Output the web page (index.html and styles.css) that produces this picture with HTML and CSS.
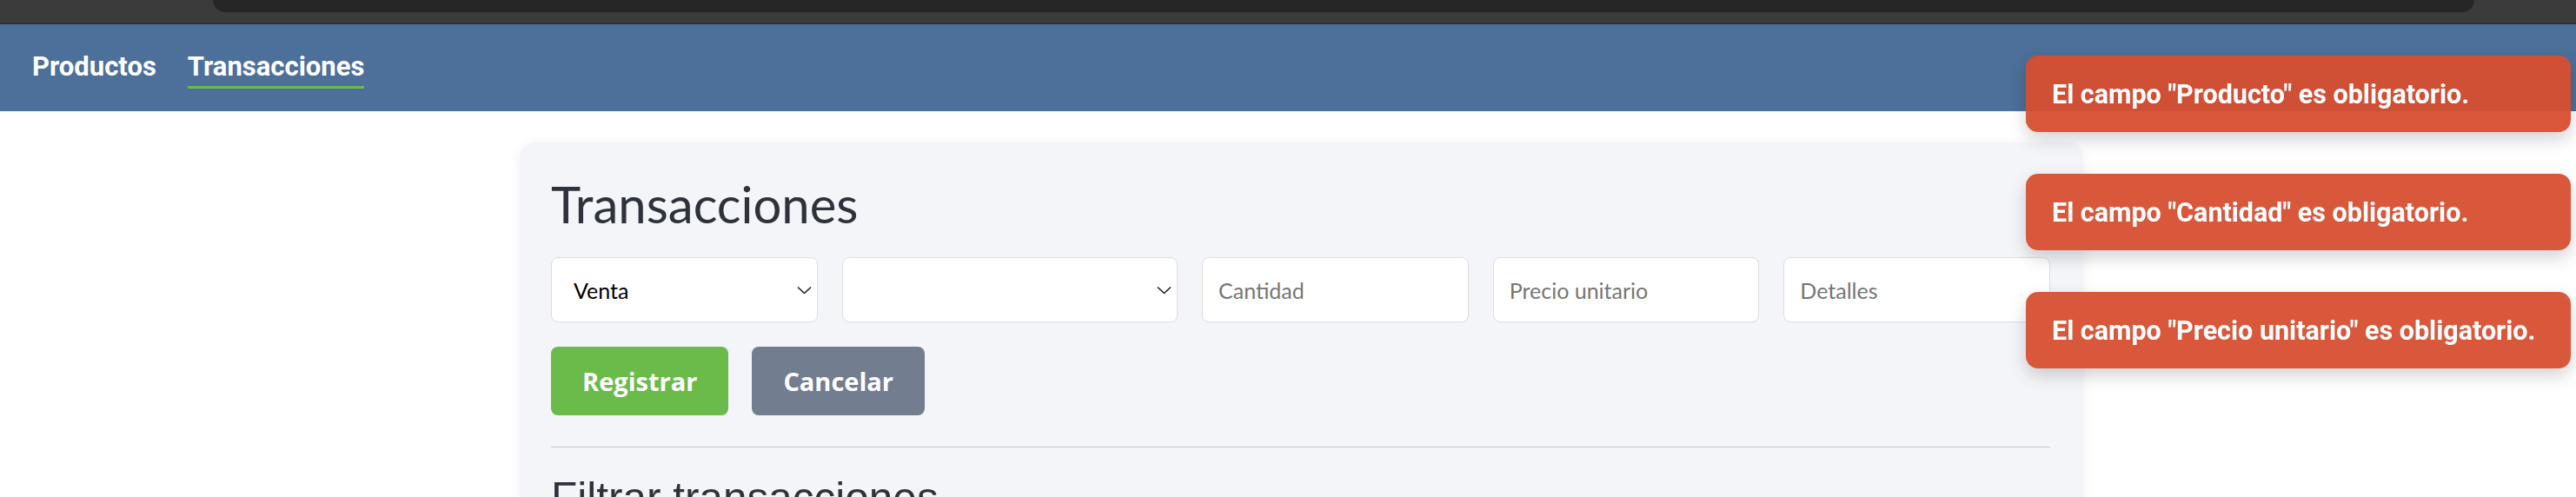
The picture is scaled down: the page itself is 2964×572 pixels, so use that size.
FILE: index.html
```html
<!DOCTYPE html>
<html lang="es">
<head>
<meta charset="utf-8">
<title>Transacciones</title>
<link rel="stylesheet" href="styles.css">
</head>
<body>
  <div class="chrome">
    <div class="urlbar"></div>
  </div>
  <nav class="nav">
    <a href="#" class="nav-link">Productos</a>
    <a href="#" class="nav-link active">Transacciones</a>
  </nav>

  <main class="main">
    <section class="card">
      <h1 class="title">Transacciones</h1>
      <form class="tx-form">
        <div class="form-row">
          <div class="select-wrap">
            <select class="field">
              <option>Venta</option>
              <option>Compra</option>
            </select>
            <svg class="chevron" width="17" height="9" viewBox="0 0 17 9"><path d="M1 1 L8.5 8 L16 1" fill="none" stroke="#1e1e1e" stroke-width="1.6"/></svg>
          </div>
          <div class="select-wrap">
            <select class="field">
              <option></option>
            </select>
            <svg class="chevron" width="17" height="9" viewBox="0 0 17 9"><path d="M1 1 L8.5 8 L16 1" fill="none" stroke="#1e1e1e" stroke-width="1.6"/></svg>
          </div>
          <input class="field" type="text" placeholder="Cantidad">
          <input class="field" type="text" placeholder="Precio unitario">
          <input class="field" type="text" placeholder="Detalles">
        </div>
        <div class="actions">
          <button type="button" class="btn btn-primary">Registrar</button>
          <button type="button" class="btn btn-secondary">Cancelar</button>
        </div>
      </form>
      <hr class="divider">
      <h2 class="subtitle">Filtrar transacciones</h2>
      <div class="filter-space"></div>
    </section>
  </main>

  <div class="toasts">
    <div class="toast">El campo "Producto" es obligatorio.</div>
    <div class="toast">El campo "Cantidad" es obligatorio.</div>
    <div class="toast">El campo "Precio unitario" es obligatorio.</div>
  </div>
</body>
</html>
```

FILE: styles.css
```css
* {
  box-sizing: border-box;
}

html, body {
  margin: 0;
  padding: 0;
  background: #ffffff;
}

body {
  font-family: "Lato", "Open Sans", sans-serif;
  overflow: hidden;
}

.chrome {
  height: 28px;
  background: #3b3b3b;
  border-bottom: 2px solid #313131;
}

.urlbar {
  margin-left: 245px;
  width: 2602px;
  height: 14px;
  background: #262626;
  border-radius: 0 0 14px 14px;
}

.nav {
  height: 100px;
  background: #4c7099;
  display: flex;
  align-items: center;
  gap: 36px;
  padding-left: 37px;
}

.nav-link {
  font-family: "Roboto", sans-serif;
  font-weight: 700;
  font-size: 31px;
  line-height: 36px;
  color: #ffffff;
  text-decoration: none;
  padding-top: 5px;
  padding-bottom: 4px;
  border-bottom: 3px solid transparent;
}

.nav-link.active {
  border-bottom-color: #6abb47;
}

.main {
  padding-top: 36px;
  padding-left: 598px;
}

.card {
  width: 1799px;
  background: #f4f5f9;
  border-radius: 18px;
  box-shadow: 0 2px 14px rgba(0, 0, 0, 0.06);
  padding: 36px 38px 40px 36px;
}

.title {
  margin: 0 0 26px;
  font-family: "Lato", sans-serif;
  font-weight: 400;
  font-size: 58px;
  line-height: 70px;
  color: #2d323b;
}

.form-row {
  display: grid;
  grid-template-columns: 307px 386px 1fr 1fr 1fr;
  gap: 28px;
}

.select-wrap {
  position: relative;
}

.field {
  width: 100%;
  height: 75px;
  margin: 0;
  border: 1px solid #dcdde3;
  border-radius: 8px;
  background: #ffffff;
  font-family: "Lato", sans-serif;
  font-size: 25px;
  color: #000000;
  padding: 0 18px;
  outline: none;
}

.field::placeholder {
  color: #767676;
}

select.field {
  appearance: none;
  -webkit-appearance: none;
  padding: 0 34px 0 25px;
}

.chevron {
  position: absolute;
  right: 7px;
  top: 50%;
  transform: translateY(-50%);
  pointer-events: none;
}

.actions {
  display: flex;
  gap: 27px;
  margin-top: 28px;
}

.btn {
  border: none;
  border-radius: 8px;
  font-family: "Open Sans", sans-serif;
  font-weight: 700;
  font-size: 29px;
  line-height: 43px;
  padding: 18px 36px;
  color: #ffffff;
  cursor: pointer;
}

.btn-primary {
  background: #6abb4a;
}

.btn-secondary {
  background: #727e90;
}

.divider {
  border: none;
  height: 1px;
  background: #c6c6cb;
  margin: 36px 0 0;
}

.subtitle {
  margin: 30px 0 0;
  font-family: "Liberation Sans", "Arial", sans-serif;
  font-weight: 400;
  font-size: 49.5px;
  line-height: 56px;
  color: #2d323b;
}

.filter-space {
  height: 200px;
}

.toasts {
  position: fixed;
  top: 64px;
  right: 6px;
  display: flex;
  flex-direction: column;
  gap: 48px;
  z-index: 10;
}

.toast {
  width: 627px;
  height: 88px;
  display: flex;
  align-items: center;
  padding: 0 30px;
  border-radius: 14px;
  background: rgba(215, 78, 48, 0.95);
  color: #ffffff;
  font-family: "Roboto", sans-serif;
  font-weight: 700;
  font-size: 30.5px;
  box-shadow: 0 8px 20px rgba(0, 0, 0, 0.18);
}
```
